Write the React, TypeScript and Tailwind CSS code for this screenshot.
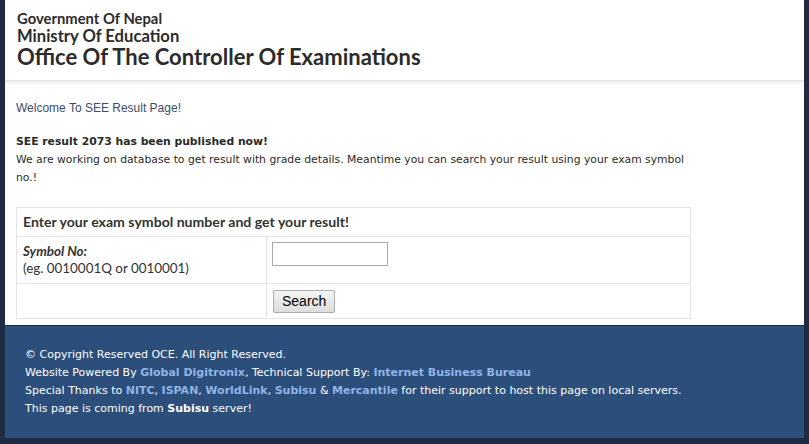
export default function App() {
  return (
    <div className="min-h-[444px] w-[809px] bg-[#1f2b45] px-[5px] pb-[8px] overflow-hidden">
      <div className="bg-white">
        <header className="h-[81px] pl-[12px] pt-[10px] font-['Lato',sans-serif] font-bold text-[#2b2b2b] shadow-[0_2px_3px_rgba(0,0,0,0.08)] border-b border-[#e6e6e6]">
          <div className="text-[14.8px] leading-[17px]">Government Of Nepal</div>
          <div className="text-[16.6px] leading-[18px]">Ministry Of Education</div>
          <div className="text-[22px] leading-[24px]">Office Of The Controller Of Examinations</div>
        </header>

        <main className="px-[11px] pt-[19px] pb-[6px]">
          <p className="font-['Liberation_Sans',Arial,sans-serif] text-[12px] leading-[16px] text-[#3b4d6b]">
            Welcome To SEE Result Page!
          </p>
          <div className="mt-[17px] font-['DejaVu_Sans',Tahoma,sans-serif] text-[10.8px] leading-[18px] text-[#2a2a2a] w-[678px]">
            <b>SEE result 2073 has been published now!</b>
            <br />
            We are working on database to get result with grade details. Meantime you can search your result using your exam symbol no.!
          </div>

          <table className="mt-[20px] w-[675px] border-collapse border border-[#e4e4e4] font-['Lato',sans-serif] text-[13.4px] text-[#333]">
            <tbody>
              <tr className="h-[29px]">
                <td colSpan={2} className="border border-[#e4e4e4] px-[6px] font-bold text-[14.1px]">
                  Enter your exam symbol number and get your result!
                </td>
              </tr>
              <tr className="h-[47px]">
                <td className="w-[250px] border border-[#e4e4e4] px-[6px] align-top pt-[6px] leading-[17px]">
                  <i className="font-bold">Symbol No:</i>
                  <br />
                  (eg. 0010001Q or 0010001)
                </td>
                <td className="border border-[#e4e4e4] px-[5px] align-top pt-[5px]">
                  <input type="text" className="block w-[116px] h-[24px] border border-[#a9a9a9] bg-white" />
                </td>
              </tr>
              <tr className="h-[35px]">
                <td className="border border-[#e4e4e4]"></td>
                <td className="border border-[#e4e4e4] px-[6px]">
                  <button className="h-[23px] px-[8px] border border-[#adadad] rounded-[2px] bg-gradient-to-b from-[#f4f4f4] to-[#dedede] font-['Liberation_Sans',Arial,sans-serif] text-[14px] text-black">
                    Search
                  </button>
                </td>
              </tr>
            </tbody>
          </table>
        </main>
      </div>

      <footer className="mt-[1px] h-[112px] bg-[#2c4e7b] pl-[20px] pt-[20px] font-['DejaVu_Sans',Tahoma,sans-serif] text-[11px] leading-[18px] text-white">
        <div>© Copyright Reserved OCE. All Right Reserved.</div>
        <div>
          Website Powered By <b className="text-[#8fb4e8]">Global Digitronix</b>, Technical Support By:{" "}
          <b className="text-[#8fb4e8]">Internet Business Bureau</b>
        </div>
        <div>
          Special Thanks to <b className="text-[#8fb4e8]">NITC</b>, <b className="text-[#8fb4e8]">ISPAN</b>,{" "}
          <b className="text-[#8fb4e8]">WorldLink</b>, <b className="text-[#8fb4e8]">Subisu</b> &amp;{" "}
          <b className="text-[#8fb4e8]">Mercantile</b> for their support to host this page on local servers.
        </div>
        <div>
          This page is coming from <b>Subisu</b> server!
        </div>
      </footer>
    </div>
  );
}
